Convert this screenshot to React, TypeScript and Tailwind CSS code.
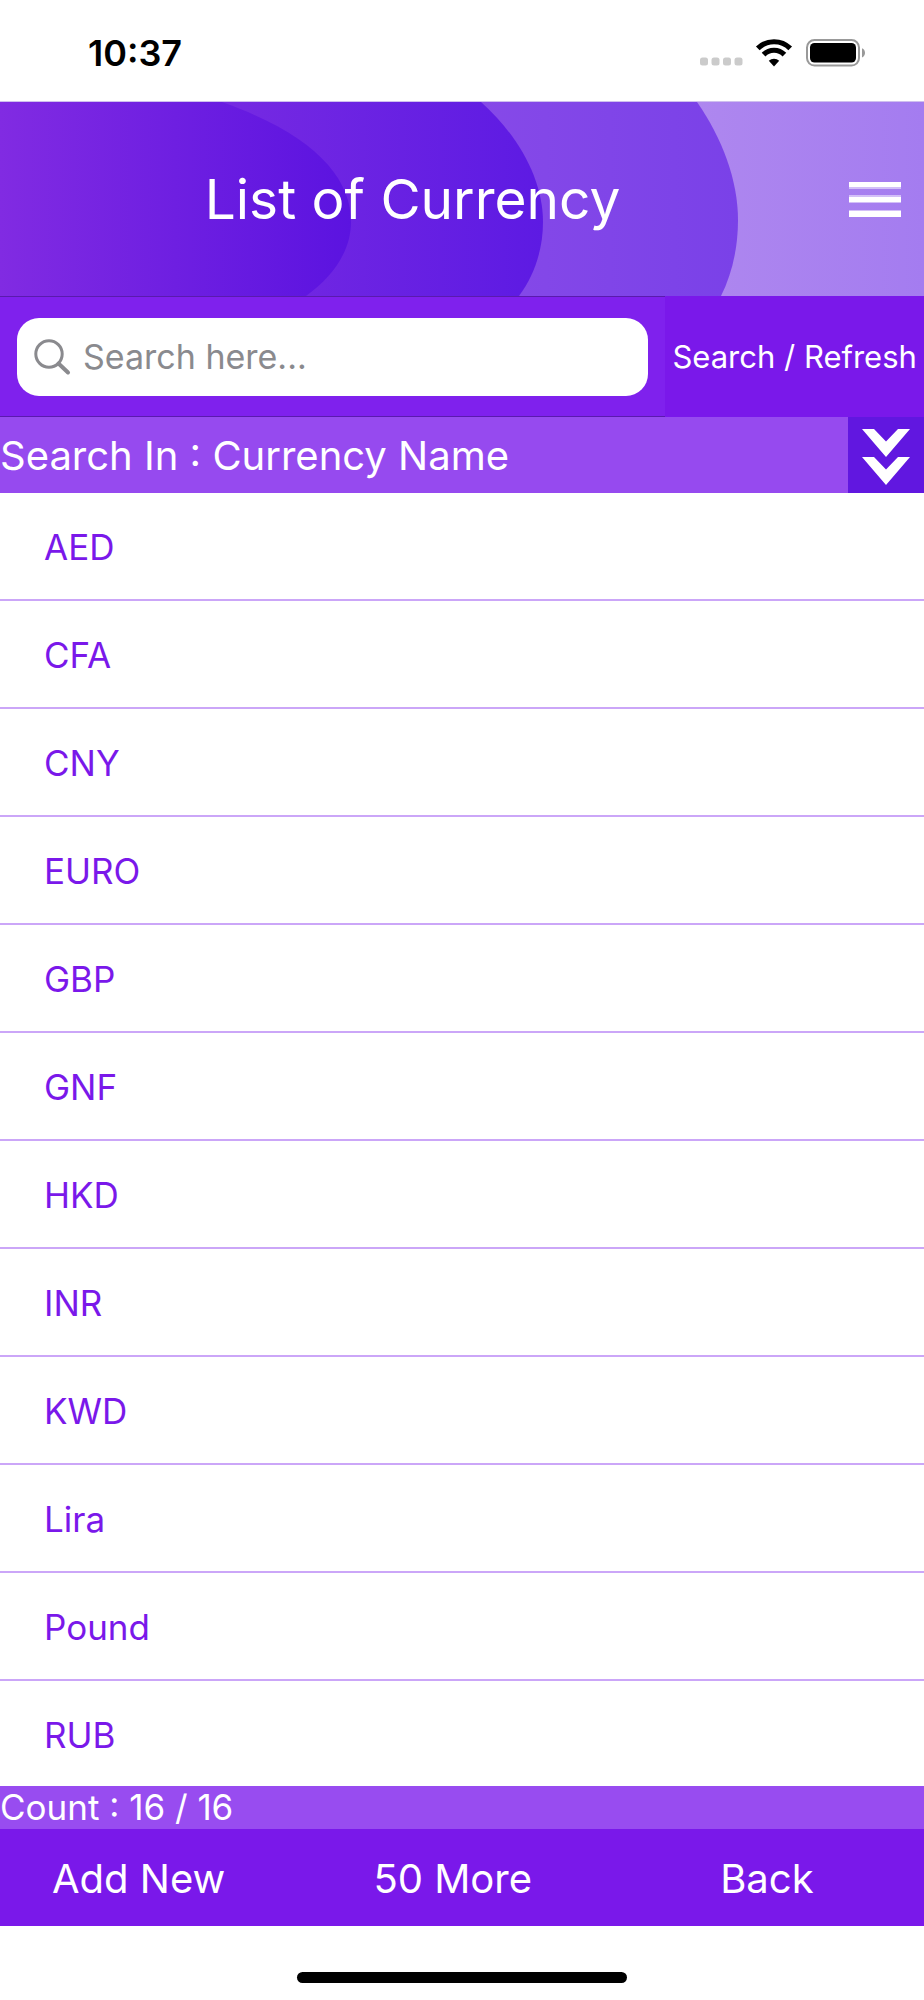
import { useState } from "react";

const currencies = [
  "AED",
  "CFA",
  "CNY",
  "EURO",
  "GBP",
  "GNF",
  "HKD",
  "INR",
  "KWD",
  "Lira",
  "Pound",
  "RUB",
];

const StatusBar = () => (
  <div className="flex h-[102px] shrink-0 items-center justify-between border-b border-[#cfc0ee] pt-1 pr-[58px] pl-[88px]">
    <p className="text-[36px] leading-[44px] font-semibold text-black">10:37</p>
    <svg width="166" height="28" viewBox="0 0 166 28" aria-hidden="true">
      <g fill="#cbcbcb">
        <rect x="0" y="18.500" width="8" height="8" rx="2.5" />
        <rect x="11.5" y="18.500" width="8" height="8" rx="2.5" />
        <rect x="23" y="18.500" width="8" height="8" rx="2.5" />
        <rect x="34.5" y="18.500" width="8" height="8" rx="2.5" />
      </g>
      <g fill="none" stroke="#000" strokeWidth="5.2">
        <path d="M57.8 9.4A23 23 0 0 1 90.2 9.4" />
        <path d="M63.6 15.6A14.6 14.6 0 0 1 84.4 15.6" />
      </g>
      <path d="M74 27.400l-5.200-5.600a7.600 7.600 0 0 1 10.400 0z" />
      <rect x="107" y="1" width="52" height="25.6" rx="7.5" fill="none" stroke="#999" strokeWidth="2" />
      <rect x="110" y="4" width="46" height="19.6" rx="4.5" />
      <path d="M162 9.200c4 1.500 4 7.700 0 9.200z" fill="#999" />
    </svg>
  </div>
);

const HeaderWaves = () => (
  <svg
    className="absolute inset-0 h-full w-full"
    viewBox="0 0 924 194"
    preserveAspectRatio="none"
    aria-hidden="true"
  >
    <defs>
      <linearGradient id="wave1" gradientUnits="userSpaceOnUse" x1="0" x2="351">
        <stop offset="0" stopColor="#812be2" />
        <stop offset="1" stopColor="#5b13e0" />
      </linearGradient>
      <linearGradient id="wave2" gradientUnits="userSpaceOnUse" x1="222" x2="543">
        <stop offset="0" stopColor="#762ae2" />
        <stop offset="1" stopColor="#5d1ae3" />
      </linearGradient>
      <linearGradient id="wave3" gradientUnits="userSpaceOnUse" x1="481" x2="738">
        <stop offset="0" stopColor="#8649e8" />
        <stop offset="1" stopColor="#7a41e8" />
      </linearGradient>
      <linearGradient id="wave4" gradientUnits="userSpaceOnUse" x1="697" x2="924">
        <stop offset="0" stopColor="#ae87ef" />
        <stop offset="1" stopColor="#a47cf0" />
      </linearGradient>
    </defs>
    <path d="M0 0H924V194H0Z" fill="url(#wave4)" />
    <path d="M0 0H697C722 36 738 78 738 118C738 146 732 172 721 194H0Z" fill="url(#wave3)" />
    <path d="M0 0H481C519 34 543 78 543 120C543 148 534 174 519 194H0Z" fill="url(#wave2)" />
    <path d="M0 0H222C312 32 351 74 351 120C351 148 334 174 306 194H0Z" fill="url(#wave1)" />
  </svg>
);

const Header = () => (
  <header className="relative flex h-[194px] shrink-0">
    <HeaderWaves />
    <h1 className="relative flex flex-1 items-center justify-center text-[55px] leading-[68px] text-white">
      List of Currency
    </h1>
    <button
      type="button"
      aria-label="Menu"
      className="relative flex w-[99px] shrink-0 items-center pl-6"
    >
      <svg width="52" height="35" viewBox="0 0 52 35" fill="#fff" aria-hidden="true">
        <rect width="52" height="7" opacity="0.5" />
        <rect width="52" height="5" />
        <rect y="13" width="52" height="8" opacity="0.5" />
        <rect y="15" width="52" height="5" />
        <rect y="28" width="52" height="7" opacity="0.5" />
        <rect y="29" width="52" height="6" />
      </svg>
    </button>
  </header>
);

const SearchRow = () => {
  const [query, setQuery] = useState("");

  return (
    <form className="flex h-[121px] shrink-0" onSubmit={(e) => e.preventDefault()}>
      <div className="flex w-[72%] items-center border-y border-[#5a1aae] bg-[#7f21ed] px-[17px]">
        <label className="flex h-[78px] w-full items-center gap-3 rounded-[22px] bg-white pl-4">
          <svg width="38" height="38" viewBox="0 0 38 38" fill="none" stroke="#8a8a8e" aria-hidden="true">
            <circle cx="16" cy="16" r="13.200" strokeWidth="3" />
            <path d="M25.500 25.500L35 34.500" strokeWidth="4" strokeLinecap="round" />
          </svg>
          <input
            type="text"
            aria-label="Search"
            placeholder="Search here..."
            value={query}
            onChange={(e) => setQuery(e.target.value)}
            className="min-w-0 flex-1 bg-transparent text-[34px] leading-[44px] text-black outline-none placeholder:text-[#8a8a8e]"
          />
        </label>
      </div>
      <button type="submit" className="flex-1 bg-[#7a18ea] text-[31px] leading-[40px] whitespace-nowrap text-white">
        Search / Refresh
      </button>
    </form>
  );
};

const SearchInRow = () => (
  <div className="flex h-[76px] shrink-0 bg-[#964aef]">
    <p className="flex flex-1 items-center pt-0.5 text-[40px] leading-[48px] text-white">
      Search In : Currency Name
    </p>
    <button
      type="button"
      aria-label="Choose search field"
      className="flex w-[76px] shrink-0 items-center justify-center bg-[#6117e0] pt-1"
    >
      <svg width="48" height="56" viewBox="0 0 48 56" fill="#fff" aria-hidden="true">
        <path d="M0 0H12L24 12.500L36 0H48L24 28Z" />
        <path d="M0 28H12L24 40.500L36 28H48L24 56Z" />
      </svg>
    </button>
  </div>
);

const Footer = () => (
  <footer className="shrink-0 text-white">
    <p className="bg-[#984cf0] text-[35px] leading-[43px]">Count : 16 / 16</p>
    <nav className="flex h-[97px] bg-[#7a18ea] text-[40px] leading-[48px]">
      <button type="button" className="w-[30%] pt-0.5">
        Add New
      </button>
      <button type="button" className="w-[38%] pt-0.5">
        50 More
      </button>
      <button type="button" className="w-[30%] pt-0.5">
        Back
      </button>
    </nav>
  </footer>
);

export default function App() {
  return (
    <div className="flex min-h-screen flex-col bg-white font-['Inter',sans-serif]">
      <StatusBar />
      <Header />
      <SearchRow />
      <SearchInRow />
      <ul className="flex-1">
        {currencies.map((name) => (
          <li
            key={name}
            className="flex h-[108px] items-center border-b-2 border-[#cba6f8] pt-0.5 pl-11 text-[35px] leading-[44px] text-[#7a18ea] last:h-[105px] last:border-b-0"
          >
            {name}
          </li>
        ))}
      </ul>
      <Footer />
      <div className="flex h-[74px] shrink-0 items-end justify-center pb-[17px]">
        <div className="h-[11px] w-[330px] rounded-full bg-black" />
      </div>
    </div>
  );
}
